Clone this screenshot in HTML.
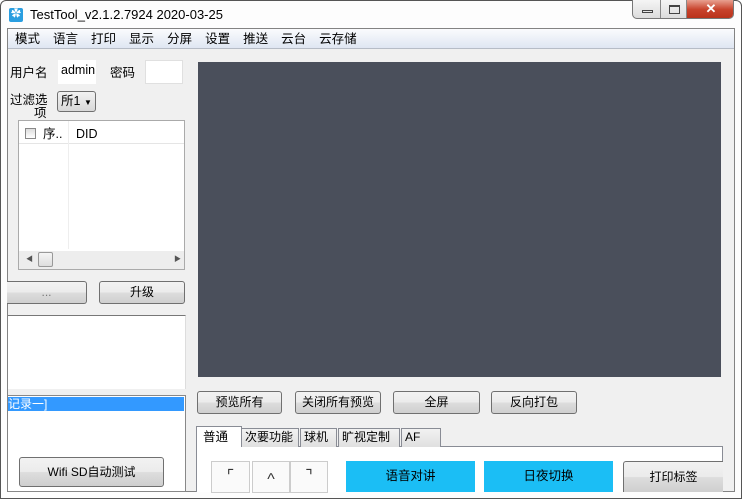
<!DOCTYPE html>
<html><head><meta charset="utf-8"><style>
*{box-sizing:border-box;margin:0;padding:0}
body{width:742px;height:499px;overflow:hidden;background:#fff;font-family:"Liberation Sans","Noto Sans CJK SC",sans-serif;font-size:12px;line-height:14px;color:#000;position:relative}
.a{position:absolute;white-space:nowrap}
.btn{position:absolute;border:1px solid #707070;border-radius:3px;background:linear-gradient(#f2f2f2,#ebebeb 50%,#dddddd 51%,#cfcfcf);text-align:center;font-size:12px;line-height:20px;white-space:nowrap}
.tab{position:absolute;top:428px;height:19px;border:1px solid #898c95;border-bottom:none;background:linear-gradient(#f2f2f2,#e0e0e0);font-size:12px;line-height:17px;padding:0 3px;white-space:nowrap;overflow:hidden}
</style></head><body>
<div class="a" style="left:0;top:0;width:742px;height:499px;border:1px solid #555;border-radius:6px 6px 0 0;background:#fdfdfd"></div>
<div class="a" style="left:9px;top:8px;width:14px;height:14px;background:#2a9ee0;border-radius:2px;color:#fff;font-size:10px;line-height:14px;text-align:center">✿</div>
<div class="a" style="left:30px;top:7px;font-size:13px;line-height:15px">TestTool_v2.1.2.7924 2020-03-25</div>
<div class="a" style="left:632px;top:0;width:102px;height:19px;border:1px solid #777;border-top:none;border-radius:0 0 5px 5px;overflow:hidden;background:linear-gradient(#f5f5f5,#dcdcdc)">
 <div class="a" style="left:27px;top:0;width:1px;height:19px;background:#888"></div>
 <div class="a" style="left:53px;top:0;width:1px;height:19px;background:#888"></div>
 <div class="a" style="left:9px;top:10px;width:11px;height:3px;border:1px solid #444"></div>
 <div class="a" style="left:36px;top:5px;width:11px;height:9px;border:1px solid #444;border-top-width:2px"></div>
 <div class="a" style="left:54px;top:0;width:48px;height:19px;background:linear-gradient(#e8a090,#c8432c 50%,#b83018);color:#fff;font-weight:bold;text-align:center;line-height:18px;font-size:13px">✕</div>
</div>
<div class="a" style="left:7px;top:28px;width:728px;height:464px;border:1px solid #838383;background:#f0f0f0"></div>
<div class="a" style="left:8px;top:29px;width:726px;height:20px;background:linear-gradient(#fafbfd,#dfe6f2);border-bottom:1px solid #b6bcc6;font-size:12.5px;line-height:20px">
<span style="margin-left:7px">模式</span><span style="margin-left:13px">语言</span><span style="margin-left:13px">打印</span><span style="margin-left:13px">显示</span><span style="margin-left:13px">分屏</span><span style="margin-left:13px">设置</span><span style="margin-left:13px">推送</span><span style="margin-left:13px">云台</span><span style="margin-left:13px">云存储</span></div>
<div class="a" style="left:10px;top:66px;font-size:12.5px">用户名</div>
<div class="a" style="left:58px;top:60px;width:38px;height:24px;background:#fff;font-size:12.5px;line-height:20px;padding-left:3px">admin</div>
<div class="a" style="left:110px;top:66px;font-size:12.5px">密码</div>
<div class="a" style="left:145px;top:60px;width:38px;height:24px;background:#fff;border:1px solid #e0e0e0"></div>
<div class="a" style="left:10px;top:94px;font-size:12.5px;line-height:13px">过滤选<br><span style="margin-left:24px">项</span></div>
<div class="a" style="left:57px;top:91px;width:39px;height:21px;border:1px solid #707070;border-radius:3px;background:linear-gradient(#f2f2f2,#d8d8d8);font-size:12.5px;line-height:19px;padding-left:3px">所1 <span style="font-size:8px">▼</span></div>
<div class="a" style="left:18px;top:120px;width:167px;height:150px;border:1px solid #aaa;background:#fff"></div>
<div class="a" style="left:19px;top:121px;width:165px;height:23px;border-bottom:1px solid #e5e5e5"></div>
<div class="a" style="left:68px;top:121px;width:1px;height:128px;background:#eee"></div>
<div class="a" style="left:25px;top:128px;width:11px;height:11px;border:1px solid #888;background:linear-gradient(#ddd,#fff)"></div>
<div class="a" style="left:43px;top:127px;font-size:12.5px">序..</div>
<div class="a" style="left:76px;top:127px;font-size:12.5px">DID</div>
<div class="a" style="left:19px;top:251px;width:165px;height:18px;background:#ededed"></div>
<div class="a" style="left:38px;top:252px;width:15px;height:15px;border:1px solid #999;border-radius:2px;background:linear-gradient(#f5f5f5,#ddd)"></div>
<div class="a" style="left:26px;top:253px;font-size:7px;color:#555">◀</div>
<div class="a" style="left:174px;top:253px;font-size:7px;color:#555">▶</div>
<div class="btn" style="left:7px;top:281px;width:80px;height:23px;border-left:none;border-radius:0 3px 3px 0;color:#777">...</div>
<div class="btn" style="left:99px;top:281px;width:86px;height:23px">升级</div>
<div class="a" style="left:8px;top:315px;width:178px;height:74px;background:#fff;border-top:1px solid #777;border-right:1px solid #ddd"></div>
<div class="a" style="left:8px;top:395px;width:178px;height:97px;background:#fff;border:1px solid #888;border-left:none"></div>
<div class="a" style="left:8px;top:397px;width:176px;height:14px;background:#3399ff;color:#fff;font-size:12px;line-height:14px">记录一]</div>
<div class="btn" style="left:19px;top:457px;width:145px;height:30px;line-height:28px">Wifi SD自动测试</div>
<div class="a" style="left:198px;top:62px;width:523px;height:315px;background:#4a4f5b"></div>
<div class="btn" style="left:197px;top:391px;width:85px;height:23px">预览所有</div>
<div class="btn" style="left:295px;top:391px;width:86px;height:23px">关闭所有预览</div>
<div class="btn" style="left:393px;top:391px;width:87px;height:23px">全屏</div>
<div class="btn" style="left:491px;top:391px;width:86px;height:23px">反向打包</div>
<div class="a" style="left:196px;top:446px;width:527px;height:46px;background:#fff;border:1px solid #898c95;border-bottom:none"></div>
<div class="a" style="left:196px;top:426px;width:46px;height:21px;background:#fff;border:1px solid #898c95;border-bottom:none;font-size:12.5px;line-height:20px;padding-left:6px">普通</div>
<div class="tab" style="left:241px;width:58px">次要功能</div>
<div class="tab" style="left:300px;width:37px">球机</div>
<div class="tab" style="left:338px;width:62px">旷视定制</div>
<div class="tab" style="left:401px;width:40px">AF</div>
<div class="a" style="left:211px;top:461px;width:39px;height:32px;border:1px solid #ccc;background:#fafafa;font-size:16px;line-height:30px;text-align:center;color:#333">⌜</div>
<div class="a" style="left:252px;top:461px;width:38px;height:32px;border:1px solid #ccc;background:#fafafa;font-size:16px;line-height:36px;text-align:center;color:#333">^</div>
<div class="a" style="left:290px;top:461px;width:38px;height:32px;border:1px solid #ccc;background:#fafafa;font-size:16px;line-height:30px;text-align:center;color:#333">⌝</div>
<div class="a" style="left:346px;top:461px;width:129px;height:31px;background:#1bbef5;text-align:center;line-height:30px;font-size:12.5px">语音对讲</div>
<div class="a" style="left:484px;top:461px;width:129px;height:31px;background:#1bbef5;text-align:center;line-height:30px;font-size:12.5px">日夜切换</div>
<div class="btn" style="left:623px;top:461px;width:100px;height:31px;border-right:none;border-bottom:none;border-radius:3px 0 0 0;line-height:30px">打印标签</div>
</body></html>
